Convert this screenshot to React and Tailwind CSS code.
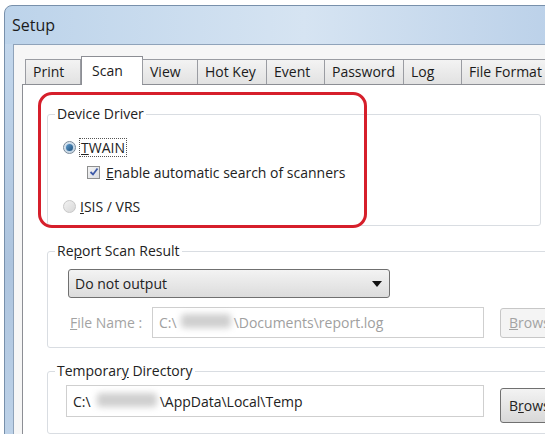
const tabs = [
  { name: 'Print', w: 56 },
  { name: 'Scan', w: 62, active: true },
  { name: 'View', w: 56 },
  { name: 'Hot Key', w: 70 },
  { name: 'Event', w: 59 },
  { name: 'Password', w: 80 },
  { name: 'Log', w: 59 },
  { name: 'File Format', w: 90 },
];

function Blur({ w }) {
  return <span className="inline-block h-[14px] bg-[#cfcfcf] blur-[3px] rounded-sm" style={{ width: w }} />;
}

function Radio({ checked, disabled }) {
  if (disabled) {
    return <span className="w-[13px] h-[13px] rounded-full border border-[#c8c8c8] bg-gradient-to-br from-[#f2f2f2] to-[#d8d8d8] shrink-0" />;
  }
  return (
    <span className="w-[13px] h-[13px] rounded-full border border-[#7a8a99] bg-gradient-to-br from-[#e8eef4] to-[#c9d6e2] flex items-center justify-center shrink-0">
      {checked && <span className="w-[7px] h-[7px] rounded-full bg-gradient-to-br from-[#5f9ccc] to-[#1b4f7c] shadow-[0_0_2px_#7fb6e0]" />}
    </span>
  );
}

// group box: padding goes on the inner div so the legend stays put
function Fieldset({ label, children, className, inner }) {
  return (
    <fieldset className={`border border-[#d9dde2] rounded-[3px] ml-[24px] w-[494px] ${className}`}>
      <legend className="ml-[7px] px-[2px] text-[14px] leading-[20px] text-[#222]">{label}</legend>
      <div className={inner}>{children}</div>
    </fieldset>
  );
}

export default function App() {
  return (
    <div className="w-[545px] h-[434px] overflow-hidden bg-white relative pt-[5px] pl-[4px]" style={{ fontFamily: '"Open Sans", "Noto Sans", sans-serif' }}>
      {/* window */}
      <div className="w-[600px] h-[480px] rounded-tl-[8px] border border-[#7890ab] bg-gradient-to-r from-[#bcd3ea] via-[#d6e4f2] to-[#b6cde7] flex flex-col">
        <div className="h-[39px] flex items-center pl-[7px] text-[16px] text-[#1b1b1b]">Setup</div>
        <div className="flex flex-1">
          <div className="w-[8px] bg-gradient-to-b from-[#c3d7ec] via-[#adc4de] to-[#c2d6eb]" />
          <div className="flex-1 border-l border-t border-[#8fa3ba] bg-[#f6f6f6] pl-[8px] pt-[11px]">
            {/* tabs */}
            <div className="flex items-end h-[28px] pl-[3px] relative z-10">
              {tabs.map((t) =>
                t.active ? (
                  <div
                    key={t.name}
                    className="h-[29px] mb-[-1px] bg-white border border-b-0 border-[#8c8e94] pl-[10px] pt-[3px] text-[14px] text-[#1b1b1b] shrink-0"
                    style={{ width: t.w }}
                  >
                    {t.name}
                  </div>
                ) : (
                  <div
                    key={t.name}
                    className="h-[25px] bg-gradient-to-b from-[#f3f3f3] to-[#e2e2e2] border border-b-0 border-[#9a9ca2] -ml-px first:ml-0 pl-[7px] pt-[2px] text-[14px] leading-[20px] text-[#1b1b1b] shrink-0 whitespace-nowrap overflow-hidden"
                    style={{ width: t.w }}
                  >
                    {t.name}
                  </div>
                )
              )}
            </div>
            {/* panel */}
            <div className="border border-[#8c8e94] bg-white h-[400px] pt-[19px] text-[14px] text-[#222]">
              <Fieldset label="Device Driver" inner="pl-[15px] pt-[13px] pb-[9px]">
                <div className="flex items-center h-[20px] gap-[4px]">
                  <Radio checked />
                  <span className="outline outline-1 outline-dotted outline-[#555] px-[1px] leading-[17px]">
                    <span className="underline">T</span>WAIN
                  </span>
                </div>
                <div className="flex items-center h-[20px] mt-[5px] ml-[24px] gap-[6px]">
                  <span className="w-[13px] h-[13px] border border-[#8e8f8f] bg-gradient-to-br from-[#f4f4f4] to-[#dadde2] flex items-center justify-center">
                    <svg width="10" height="10" viewBox="0 0 10 10">
                      <path d="M1.5 5 L4 7.5 L8.5 1.5" fill="none" stroke="#3d5aa8" strokeWidth="1.8" />
                    </svg>
                  </span>
                  <span>
                    <span className="underline">E</span>nable automatic search of scanners
                  </span>
                </div>
                <div className="flex items-center h-[20px] mt-[14px] gap-[4px]">
                  <Radio disabled />
                  <span>
                    <span className="underline">I</span>SIS / VRS
                  </span>
                </div>
              </Fieldset>

              <Fieldset label={<>Re<span className="underline">p</span>ort Scan Result</>} className="mt-[15px]" inner="pl-[20px] pt-[8px] pb-[9px]">
                <div className="w-[322px] h-[29px] rounded-[3px] border border-[#707070] bg-gradient-to-b from-[#f3f3f3] to-[#dcdcdc] flex items-center justify-between pl-[6px] pr-[7px]">
                  <span>Do not output</span>
                  <svg width="10" height="6" viewBox="0 0 10 6"><path d="M0 0 H10 L5 6 Z" fill="#111" /></svg>
                </div>
                <div className="flex items-center mt-[9px]">
                  <span className="w-[84px] pl-[2px] text-[#a3a3a3]">
                    <span className="underline">F</span>ile Name :
                  </span>
                  <div className="w-[332px] h-[31px] border border-[#cfcfcf] flex items-center pl-[6px] text-[#a0a0a0]">
                    C:\<span className="ml-[4px] mr-[3px]"><Blur w={50} /></span>\Documents\report.log
                  </div>
                  <div className="ml-[16px] w-[75px] h-[30px] border border-[#c7c7c7] rounded-[3px] bg-[#f4f4f4] flex items-center pl-[8px] text-[#a3a3a3] shrink-0">
                    <span className="underline">B</span>rowse
                  </div>
                </div>
              </Fieldset>

              <Fieldset label={<>Temporar<span className="underline">y</span> Directory</>} className="mt-[13px]" inner="pl-[18px] pt-[4px] pb-[10px]">
                <div className="flex items-start">
                  <div className="w-[418px] h-[32px] border border-[#cfcfcf] flex items-center pl-[6px] text-[#222]">
                    C:\<span className="ml-[6px] mr-[3px]"><Blur w={60} /></span>\AppData\Local\Temp
                  </div>
                  <div className="ml-[16px] mt-[3px] w-[75px] h-[35px] border border-[#707070] rounded-[3px] bg-gradient-to-b from-[#f3f3f3] to-[#d8d8d8] flex items-center pl-[8px] shrink-0">
                    B<span className="underline">r</span>owse
                  </div>
                </div>
              </Fieldset>
            </div>
          </div>
        </div>
      </div>

      {/* red highlight annotation */}
      <div className="absolute left-[38px] top-[92px] w-[329px] h-[136px] border-[3px] border-[#d61f2b] rounded-[14px] pointer-events-none" />
    </div>
  );
}
